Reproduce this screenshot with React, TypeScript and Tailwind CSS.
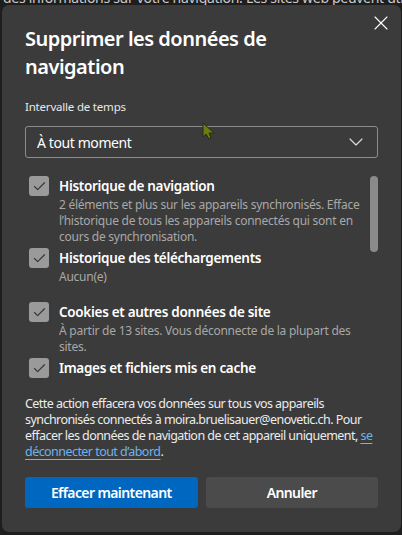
import { Check, ChevronDown, X } from "lucide-react";

const font = { fontFamily: '"Noto Sans", "Open Sans", sans-serif' };

interface DataItem {
  label: string;
  desc?: string;
  gap: string;
}

const ITEMS: DataItem[] = [
  {
    label: "Historique de navigation",
    desc: "2 éléments et plus sur les appareils synchronisés. Efface l’historique de tous les appareils connectés qui sont en cours de synchronisation.",
    gap: "",
  },
  { label: "Historique des téléchargements", desc: "Aucun(e)", gap: "mt-[3px]" },
  {
    label: "Cookies et autres données de site",
    desc: "À partir de 13 sites. Vous déconnecte de la plupart des sites.",
    gap: "mt-[17px]",
  },
  { label: "Images et fichiers mis en cache", gap: "mt-[3px]" },
];

function Checkbox() {
  return (
    <div className="w-5 h-5 shrink-0 rounded-[3px] bg-[#9a9a9a] flex items-center justify-center">
      <Check size={15} strokeWidth={2} className="text-[#3a3a3a]" />
    </div>
  );
}

export default function App() {
  return (
    <div className="relative w-[402px] h-[535px] overflow-hidden bg-[#1e1e1e]" style={font}>
      {/* page behind the dialog */}
      <p className="absolute left-[3px] top-[-13px] whitespace-nowrap text-[14px] tracking-[-0.3px] text-[#c9c9c9]">
        des informations sur votre navigation. Les sites web peuvent utiliser
      </p>

      <div className="absolute left-[2px] top-[5px] w-[399px] h-[527px] rounded-[7px] bg-[#3b3b3b] flex flex-col px-[23px]">
        <button className="absolute right-[8px] top-[6px] w-6 h-6 flex items-center justify-center text-white">
          <X size={24} strokeWidth={1.1} />
        </button>

        <h1 className="mt-[20px] text-[20px] leading-[28px] font-semibold tracking-[-0.5px] text-white pr-[90px]">
          Supprimer les données de navigation
        </h1>

        <p className="mt-[18px] text-[11.5px] leading-[16px] tracking-[-0.2px] text-[#e8e8e8]">Intervalle de temps</p>

        <div className="mt-[11px] h-[32px] border border-[#8c8c8c] rounded-[3px] flex items-center justify-between pl-[11px] pr-[9px]">
          <span className="text-[14px] tracking-[-0.4px] text-white">À tout moment</span>
          <ChevronDown size={24} strokeWidth={1.1} className="text-[#e0e0e0]" />
        </div>

        <div className="relative mt-[18px] h-[208px] overflow-hidden">
          <div className="flex flex-col pl-[4px] pr-[12px]">
            {ITEMS.map((item) => (
              <div key={item.label} className={`flex gap-[10px] ${item.gap}`}>
                <Checkbox />
                <div className="flex-1 min-w-0">
                  <p className="text-[13.5px] leading-[20px] font-semibold tracking-[-0.3px] text-white">{item.label}</p>
                  {item.desc && (
                    <p className="mt-[1px] text-[12px] leading-[16px] tracking-[-0.25px] text-[#a8a8a8]">{item.desc}</p>
                  )}
                </div>
              </div>
            ))}
          </div>
          <div className="absolute right-[0px] top-[0px] w-[8px] h-[76px] rounded-full bg-[#8a8a8a]" />
        </div>

        <p className="mt-[12px] text-[12.5px] leading-[16px] tracking-[-0.55px] text-[#ececec]">
          Cette action effacera vos données sur tous vos appareils synchronisés connectés à moira.bruelisauer@enovetic.ch. Pour effacer les données de navigation de cet appareil uniquement,{" "}
          <a className="text-[#6cb4ee] underline underline-offset-[3px]">se déconnecter tout d’abord</a>.
        </p>

        <div className="mt-[17px] grid grid-cols-2 gap-[8px]">
          <button className="h-[31px] rounded-[3px] bg-[#0067c0] text-white text-[14px] font-semibold tracking-[-0.6px]">
            Effacer maintenant
          </button>
          <button className="h-[31px] rounded-[3px] bg-[#4b4b4b] text-white text-[14px] font-semibold tracking-[-0.6px]">
            Annuler
          </button>
        </div>
      </div>

      {/* mouse pointer */}
      <svg className="absolute left-[202px] top-[122px]" width="14" height="18" viewBox="0 0 14 18">
        <polygon points="1,1 1,15 4,12 7,17 9,16 7,11 12,11" fill="#6b7d12" stroke="#2b2b10" strokeWidth="1" />
      </svg>
    </div>
  );
}
